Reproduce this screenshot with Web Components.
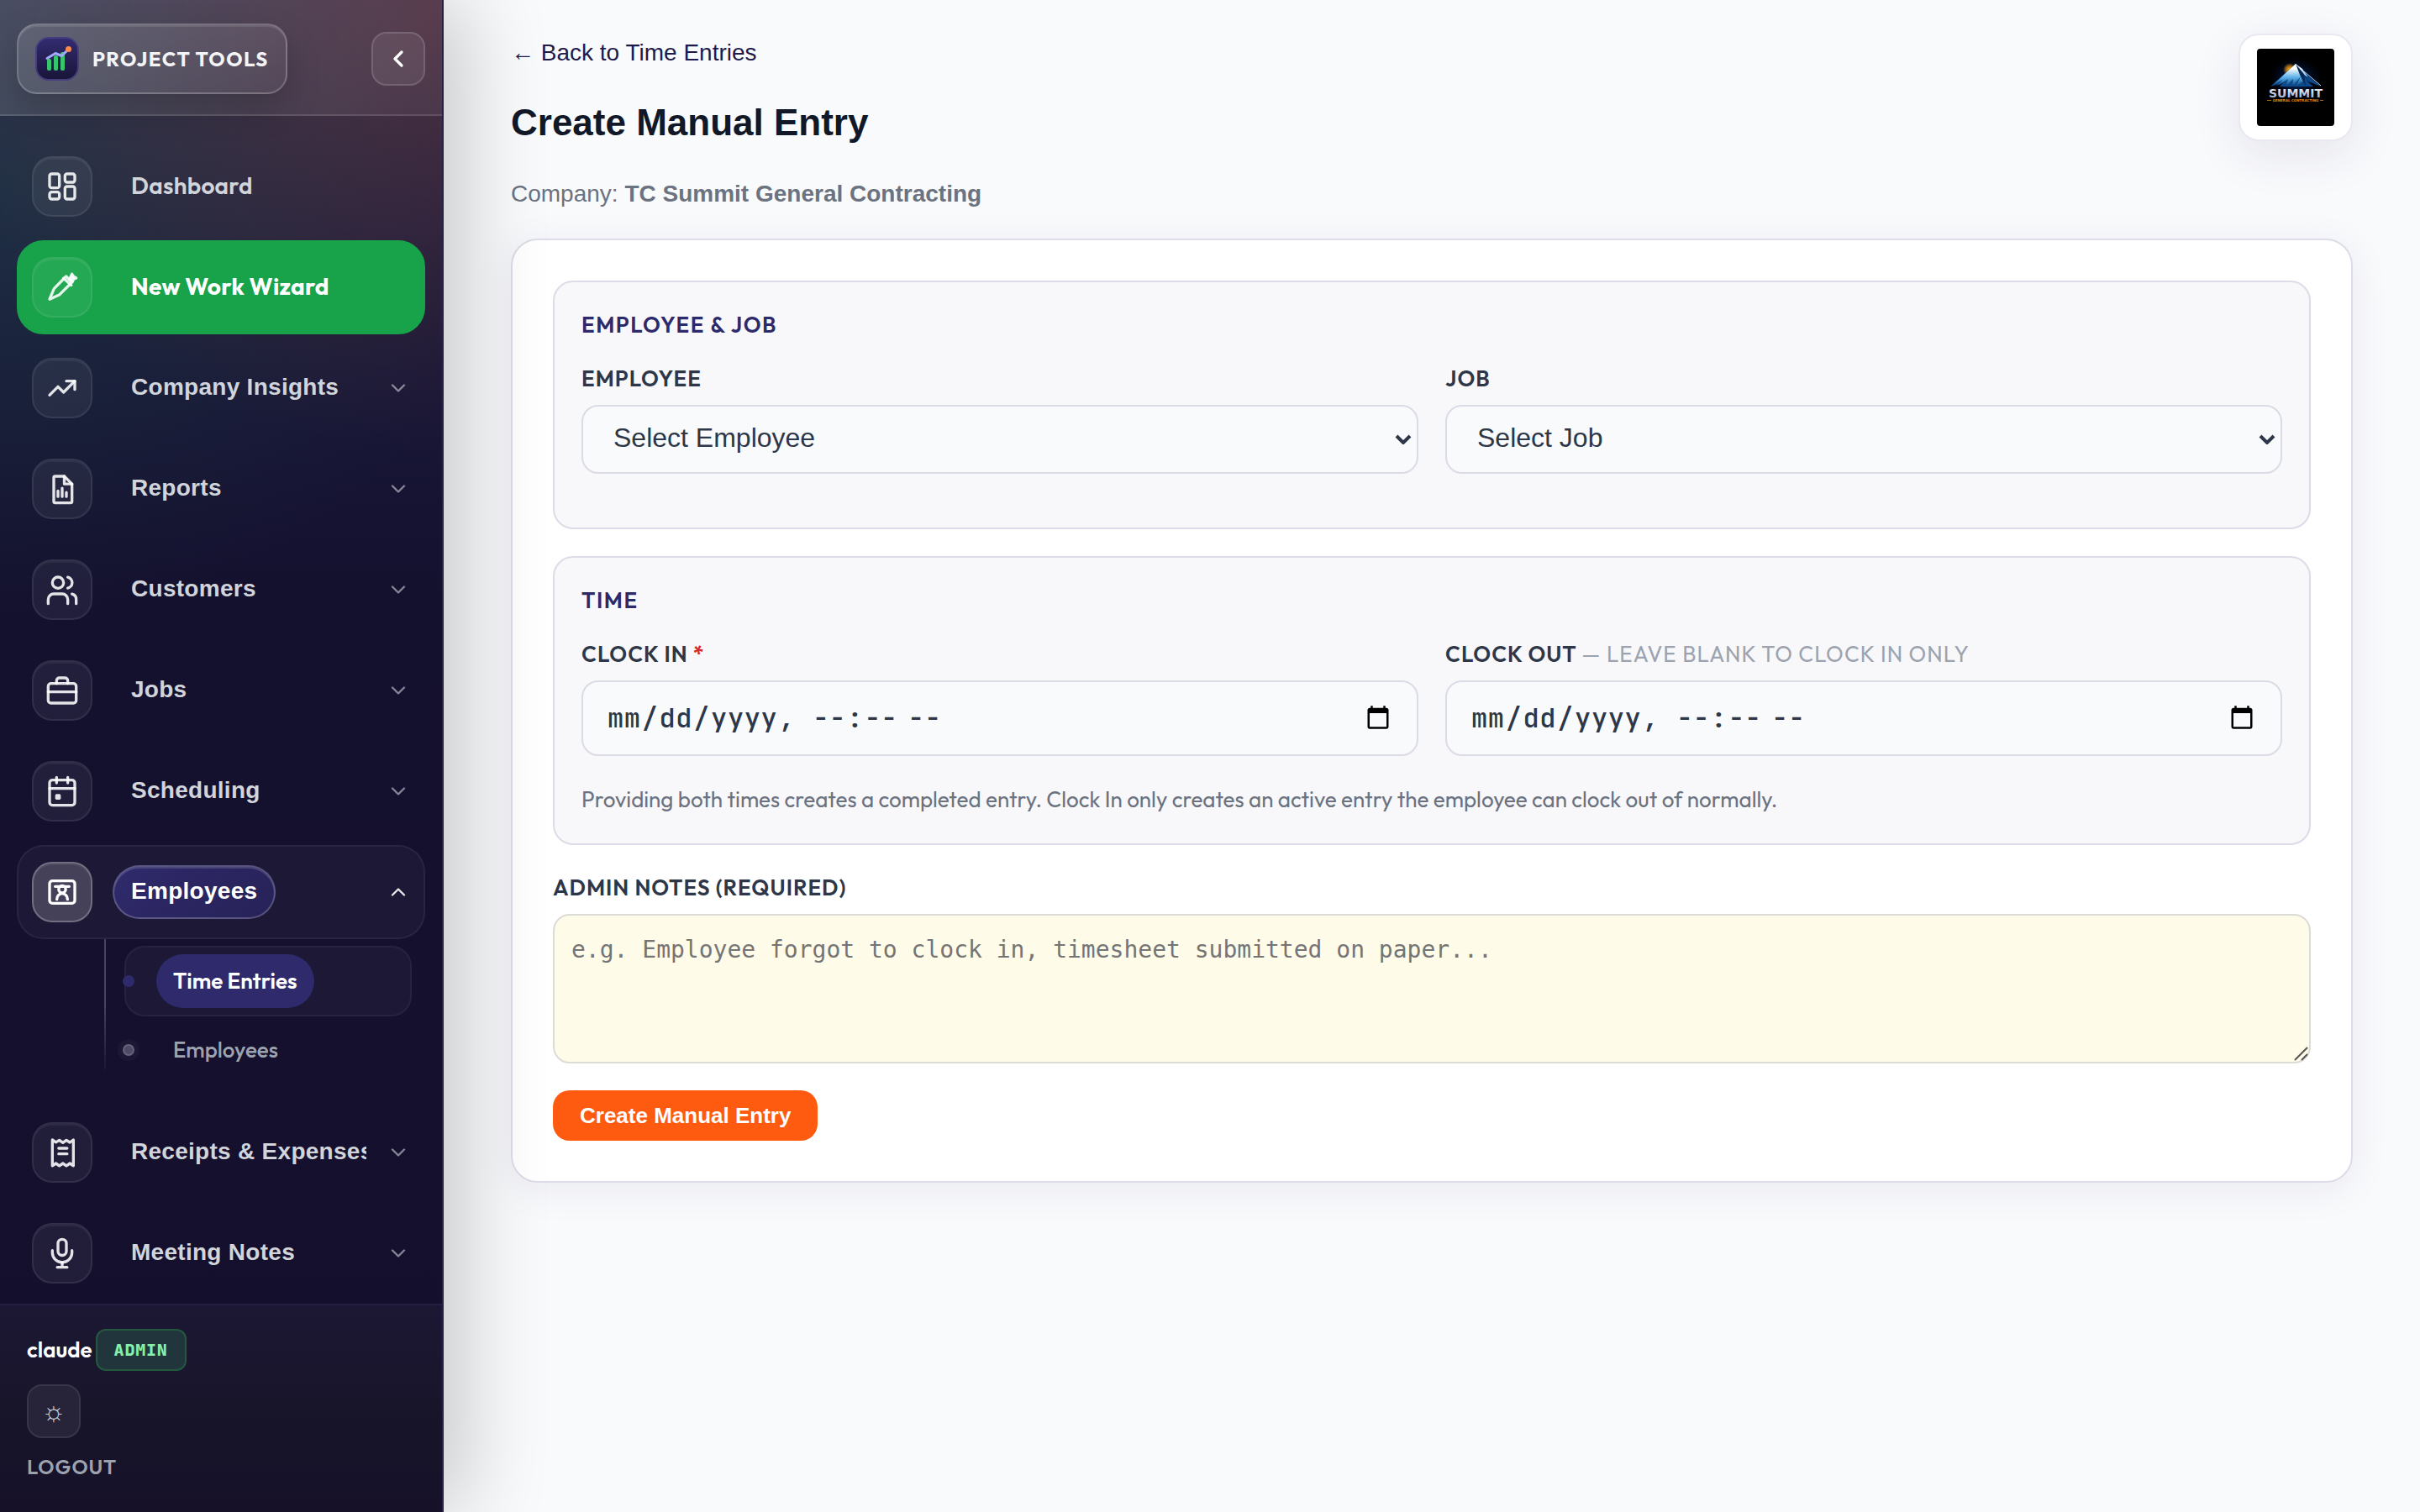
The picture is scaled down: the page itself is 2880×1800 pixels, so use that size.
<!DOCTYPE html>
<html lang="en">
<head>
<meta charset="utf-8">
<title>Create Manual Entry</title>
<style>
    body { margin: 0; }
</style>
</head>
<body>
<time-entry-app></time-entry-app>

<script>
const UI_FONT = `Outfit, Lato, sans-serif`;
const BASE_FONT = `"Liberation Sans", Arial, sans-serif`;
const MONO_FONT = `"JetBrains Mono", "DejaVu Sans Mono", monospace`;

const ICONS = {
    dashboard: `<rect x="3" y="3" width="7" height="10" rx="1.5"/><rect x="14" y="3" width="7" height="6" rx="1.5"/><rect x="14" y="12" width="7" height="9" rx="1.5"/><rect x="3" y="16" width="7" height="5" rx="1.5"/>`,
    wizard: `<path d="M3 20.5 6.2 13 14.8 4.2 19 8.4 10.2 17.2z"/><path d="M13 5.5l5.5 5"/><path d="M19 2.6l1 1.6 2 1.2-1.8.8-.8 1.8-2-2z" fill="currentColor"/>`,
    insights: `<path d="M3 17l6-6 4 4 8-8"/><path d="M15 7h6v6"/>`,
    reports: `<path d="M13.5 3H7a1 1 0 0 0-1 1v17a1 1 0 0 0 1 1h11a1 1 0 0 0 1-1V8.5z"/><path d="M13.5 3v5.5H19"/><path d="M9 13.5v4M12 11.5v6M15 14.5v3"/>`,
    customers: `<path d="M16 22v-3a4 4 0 0 0-4-4H6a4 4 0 0 0-4 4v3"/><circle cx="9" cy="7" r="4"/><path d="M22 22v-3a4 4 0 0 0-3-3.9"/><path d="M16 3.1a4 4 0 0 1 0 7.8"/>`,
    jobs: `<rect x="2" y="7" width="20" height="14" rx="2"/><path d="M8 7V5a2 2 0 0 1 2-2h4a2 2 0 0 1 2 2v2"/><path d="M2 13h20"/>`,
    scheduling: `<rect x="3" y="4" width="18" height="18" rx="2"/><path d="M8 2v4M16 2v4M3 10h18"/><rect x="8" y="15" width="2" height="2"/>`,
    employees: `<rect x="3" y="4" width="18" height="16" rx="2"/><circle cx="12" cy="10" r="2.5"/><path d="M7 8h10"/><path d="M8.2 17.2a3.8 4.2 0 0 1 7.6 0"/>`,
    receipts: `<path d="M5 3l2.5 1.7L10 3.2l2.5 1.8L15 3.2l2.5 1.6L20 3v18.5l-2.5-1.7L15 21.5l-2.5-1.7L10 21.5l-2.5-1.7L5 21.5z"/><path d="M9.5 9h6M9.5 13h6"/>`,
    meetings: `<rect x="9" y="2" width="6" height="11.5" rx="3"/><path d="M5 10v1.5a7 7 0 0 0 14 0V10"/><path d="M12 18.5V22M8.5 22h7"/>`,
    chevron: `<path d="M6 9l6 6 6-6"/>`,
    back: `<path d="M15 6l-6 6 6 6"/>`
};

const icon = (name, size, stroke = 2) =>
    `<svg width="${size}" height="${size}" viewBox="0 0 24 24" fill="none" stroke="currentColor" stroke-width="${stroke}" stroke-linecap="round" stroke-linejoin="round" aria-hidden="true">${ICONS[name]}</svg>`;


class NavItem extends HTMLElement {
    #shadow = this.attachShadow({ mode: 'open' });

    connectedCallback() {
        const group = this.hasAttribute('group');
        const open = this.hasAttribute('open');
        const inner = `
            <span class="icon">${icon(this.getAttribute('icon'), 40)}</span>
            <span class="text"><span class="label"><slot></slot></span></span>
            ${group ? `<span class="chevron">${icon('chevron', 28)}</span>` : ''}`;
        this.#shadow.innerHTML = `
            <style>
                :host { display: block; flex: none; }
                .row {
                    display: flex; align-items: center; gap: 24px; width: 100%; height: 112px; box-sizing: border-box;
                    padding: 0 16px; border: 2px solid transparent; border-radius: 32px; background: none;
                    color: #d1d5db; font: 600 28px/36px ${UI_FONT}; letter-spacing: .01em; text-align: left; text-decoration: none;
                }
                button.row { font-family: ${BASE_FONT}; }
                .icon {
                    display: grid; place-items: center; flex: none; width: 72px; height: 72px; box-sizing: border-box;
                    border: 2px solid rgba(255, 255, 255, .08); border-radius: 24px; color: rgba(255, 255, 255, .88);
                    background: rgba(255, 255, 255, .06); box-shadow: inset 0 2px 0 rgba(255, 255, 255, .05);
                }
                .text { flex: 1; min-width: 0; overflow: hidden; white-space: nowrap; }
                .label { display: block; width: fit-content; padding: 11px 20px 13px; border: 2px solid transparent; border-radius: 32px; }
                .chevron { display: flex; opacity: .6; }
                :host([accent]) .row { background: #18a34a; border-color: #18a34a; color: #fff; font-weight: 700; }
                :host([open]) .row { background: rgba(255, 255, 255, .035); border-color: rgba(255, 255, 255, .06); color: #fff; }
                :host([open]) .icon { background: rgba(255, 255, 255, .18); border-color: rgba(255, 255, 255, .24); color: #fff; }
                :host([open]) .label {
                    background: linear-gradient(135deg, #2f2a6b, #272257); border-color: rgba(255, 255, 255, .22);
                    box-shadow: inset 0 2px 0 rgba(255, 255, 255, .14);
                }
                :host([open]) .chevron { transform: rotate(180deg); opacity: .9; }
            </style>
            ${group ? `<button class="row" type="button" aria-expanded="${open}">${inner}</button>` : `<a class="row" href="#">${inner}</a>`}`;
    }
}

customElements.define('nav-item', NavItem);


class SubItem extends HTMLElement {
    #shadow = this.attachShadow({ mode: 'open' });

    constructor() {
        super();
        this.#shadow.innerHTML = `
            <style>
                :host { display: block; }
                a {
                    display: flex; align-items: center; height: 76px; box-sizing: border-box; padding: 0 36px;
                    position: relative; border: 2px solid transparent; border-radius: 24px;
                    color: #9ca3af; font: 500 26px/36px ${UI_FONT}; text-decoration: none;
                }
                a::before {
                    content: ''; position: absolute; left: -4px; width: 14px; height: 14px; border-radius: 50%; box-sizing: border-box;
                    background: #4f4b67; border: 2px solid #66627c; box-shadow: 0 0 0 6px rgba(255, 255, 255, .03);
                }
                span { padding: 14px 20px; border-radius: 32px; }
                :host([active]) a { height: 84px; background: rgba(255, 255, 255, .035); border-color: rgba(255, 255, 255, .05); color: #fff; font-weight: 600; }
                :host([active]) a::before { background: #2f2a6b; border-color: #2f2a6b; box-shadow: none; }
                :host([active]) span { background: #2f2a6b; }
            </style>
            <a href="#"><span><slot></slot></span></a>`;
    }
}

customElements.define('sub-item', SubItem);


class SideBar extends HTMLElement {
    #shadow = this.attachShadow({ mode: 'open' });

    constructor() {
        super();
        this.#shadow.innerHTML = `
            <style>
                :host {
                    display: flex; flex-direction: column; flex: none; width: 528px; height: 100vh; box-sizing: border-box;
                    position: relative; z-index: 1; border-right: 2px solid #262145; font-family: ${UI_FONT};
                    background:
                        radial-gradient(620px 540px at 100% 0, rgba(255, 96, 40, .18), transparent),
                        radial-gradient(620px 520px at 0 220px, rgba(34, 160, 100, .14), transparent),
                        linear-gradient(180deg, #29274a 0, #1c1a3c 320px, #14112f 700px, #140f2d 100%);
                    box-shadow: 24px 0 96px rgba(0, 0, 0, .2);
                }
                header {
                    display: flex; align-items: center; justify-content: space-between;
                    padding: 28px 20px 24px; border-bottom: 2px solid rgba(255, 255, 255, .12);
                    background: linear-gradient(100deg, rgba(255, 255, 255, .13), rgba(255, 255, 255, .05));
                }
                .brand {
                    display: flex; align-items: center; gap: 16px; padding: 14px 20px; border-radius: 24px;
                    border: 2px solid rgba(255, 255, 255, .2); background: linear-gradient(160deg, rgba(255, 255, 255, .13), rgba(255, 255, 255, .04));
                    box-shadow: 0 16px 40px rgba(0, 0, 0, .2), inset 0 2px 0 rgba(255, 255, 255, .1);
                    color: #f4f4f6; font: 700 24px/32px ${UI_FONT}; letter-spacing: .06em; text-decoration: none; white-space: nowrap;
                }
                .collapse {
                    display: grid; place-items: center; width: 64px; height: 64px; padding: 0; border-radius: 18px; color: #fff;
                    border: 2px solid rgba(255, 255, 255, .14); background: rgba(255, 255, 255, .08);
                }
                nav { display: flex; flex-direction: column; gap: 8px; flex: 1; min-height: 0; overflow: hidden; padding: 28px 20px 0; }
                .sub { margin: -8px 0 0 104px; border-left: 2px solid; border-image: linear-gradient(#49455f 40%, #1c1834 81%, transparent 82%) 1; padding: 8px 16px 20px 22px; }
                sub-item + sub-item { margin-top: 2px; }
                footer {
                    display: flex; flex-direction: column; align-items: flex-start; gap: 16px; padding: 28px 32px 36px;
                    border-top: 2px solid #242040; background: linear-gradient(180deg, #1c1834, #171429 60%, #161129);
                }
                .user { display: flex; align-items: center; gap: 4px; color: #fff; font: 600 26px/34px ${UI_FONT}; }
                .role {
                    padding: 7px 20px; border: 2px solid #24583f; border-radius: 12px; background: #20353c;
                    color: #86efac; font: 800 20px/32px ${MONO_FONT}; letter-spacing: .04em;
                }
                .theme {
                    width: 64px; height: 64px; padding: 0; border: 2px solid #383449; border-radius: 18px;
                    background: #272338; color: #d1d5db; font: 32px/36px ${BASE_FONT};
                }
                .logout { color: #9ca3af; font: 600 24px/36px ${UI_FONT}; letter-spacing: .04em; text-decoration: none; }
            </style>
            <header>
                <a class="brand" href="#">
                    <svg width="52" height="52" viewBox="0 0 52 52" aria-hidden="true">
                        <defs><linearGradient id="tile" x1="0" y1="0" x2="0" y2="1"><stop stop-color="#322c72"/><stop offset="1" stop-color="#191437"/></linearGradient></defs>
                        <rect x="1" y="1" width="50" height="50" rx="15" fill="url(#tile)" stroke="#453f80" stroke-width="2"/>
                        <g fill="#36c76c"><rect x="14" y="26" width="5" height="14" rx="2"/><rect x="22" y="22" width="5" height="18" rx="2"/><rect x="30" y="18" width="5" height="22" rx="2"/></g>
                        <path d="M14 25.5l10-6 7.5 3 8-8" fill="none" stroke="#a5a8ff" stroke-width="3" stroke-linecap="round" stroke-linejoin="round"/>
                        <circle cx="39.5" cy="14.5" r="3.5" fill="#ff8a4c"/>
                    </svg>
                    PROJECT TOOLS
                </a>
                <button class="collapse" type="button" aria-label="Collapse sidebar">${icon('back', 32, 2.5)}</button>
            </header>
            <nav>
                <nav-item icon="dashboard">Dashboard</nav-item>
                <nav-item icon="wizard" accent>New Work Wizard</nav-item>
                <nav-item icon="insights" group>Company Insights</nav-item>
                <nav-item icon="reports" group>Reports</nav-item>
                <nav-item icon="customers" group>Customers</nav-item>
                <nav-item icon="jobs" group>Jobs</nav-item>
                <nav-item icon="scheduling" group>Scheduling</nav-item>
                <nav-item icon="employees" group open>Employees</nav-item>
                <div class="sub">
                    <sub-item active>Time Entries</sub-item>
                    <sub-item>Employees</sub-item>
                </div>
                <nav-item icon="receipts" group>Receipts &amp; Expenses</nav-item>
                <nav-item icon="meetings" group>Meeting Notes</nav-item>
            </nav>
            <footer>
                <div class="user">claude <span class="role">ADMIN</span></div>
                <button class="theme" type="button" aria-label="Toggle theme">☼</button>
                <a class="logout" href="#">LOGOUT</a>
            </footer>`;
    }
}

customElements.define('side-bar', SideBar);


class FormSection extends HTMLElement {
    #shadow = this.attachShadow({ mode: 'open' });

    connectedCallback() {
        this.#shadow.innerHTML = `
            <style>
                :host { display: block; padding: 32px; border: 2px solid #dcdbe7; border-radius: 24px; background: #f8f8fb; }
                h2 { margin: 0 0 26px; color: #2d2a6b; font: 600 26px/38px ${UI_FONT}; letter-spacing: .06em; }
                .grid { display: grid; grid-template-columns: 1fr 1fr; gap: 32px; }
            </style>
            <h2>${this.getAttribute('heading')}</h2>
            <div class="grid"><slot></slot></div>
            <slot name="hint"></slot>`;
    }
}

customElements.define('form-section', FormSection);


// one label and one control; kind is select, datetime or notes
class FormField extends HTMLElement {
    #shadow = this.attachShadow({ mode: 'open' });

    connectedCallback() {
        const hint = this.getAttribute('placeholder');
        const control = {
            select: `<span class="pick"><select id="control"><option>${hint}</option></select>
                <svg width="20" height="12" viewBox="0 0 20 12" aria-hidden="true"><path d="M2 2l8 8 8-8" fill="none" stroke="currentColor" stroke-width="4"/></svg></span>`,
            datetime: `<input id="control" type="datetime-local">`,
            notes: `<span class="pad"><textarea id="control" placeholder="${hint}"></textarea>
                <svg width="20" height="20" viewBox="0 0 20 20" aria-hidden="true"><path d="M3 18L18 3M11 18l7-7" fill="none" stroke="#555" stroke-width="2"/></svg></span>`
        }[this.getAttribute('kind')];
        this.#shadow.innerHTML = `
            <style>
                :host { display: flex; flex-direction: column; gap: 12px; min-width: 0; color: #2d3748; }
                label { font: 600 26px/38px ${UI_FONT}; letter-spacing: .04em; }
                select, input, textarea {
                    display: block; width: 100%; box-sizing: border-box; margin: 0; border: 2px solid #dadbe5; border-radius: 20px;
                    background: #f9fafc; color: #2d3748;
                }
                select { appearance: none; padding: 18px 36px 22px; font: 32px/38px ${BASE_FONT}; }
                input { height: 90px; padding: 0 28px; font: 500 32px/42px ${MONO_FONT}; letter-spacing: .02em; }
                textarea { min-height: 178px; padding: 20px; background: #fefbe8; border-color: #dddbd5; font: 28px/42px "DejaVu Sans Mono", monospace; resize: none; }
                .pick, .pad { display: grid; }
                .pick > *, .pad > * { grid-area: 1 / 1; }
                .pick svg { place-self: center end; margin-right: 8px; pointer-events: none; }
                .pad svg { place-self: end; margin: 2px; pointer-events: none; }
            </style>
            <label for="control"><slot></slot></label>
            ${control}`;
    }
}

customElements.define('form-field', FormField);


class CompanyLogo extends HTMLElement {
    #shadow = this.attachShadow({ mode: 'open' });

    constructor() {
        super();
        this.#shadow.innerHTML = `
            <style>
                :host {
                    display: block; flex: none; padding: 16px 20px; border: 2px solid #e9e8f0; border-radius: 24px;
                    background: #fff; box-shadow: 0 16px 56px rgba(45, 35, 90, .1);
                }
                svg { display: block; border-radius: 4px; background: #000; }
            </style>
            <svg width="92" height="92" viewBox="0 0 92 92" role="img" aria-label="Summit General Contracting">
                <defs>
                    <radialGradient id="glow"><stop stop-color="#0b4fc0" stop-opacity=".8"/><stop offset="1" stop-color="#001" stop-opacity="0"/></radialGradient>
                    <radialGradient id="sun"><stop stop-color="#ffb020"/><stop offset=".5" stop-color="#f59a10" stop-opacity=".7"/><stop offset="1" stop-color="#f59a10" stop-opacity="0"/></radialGradient>
                    <linearGradient id="ice" x1="0" y1="0" x2="0" y2="1"><stop offset=".2" stop-color="#fff"/><stop offset=".6" stop-color="#5ab0e8"/><stop offset="1" stop-color="#07407e"/></linearGradient>
                    <linearGradient id="steel" x1="0" y1="0" x2="0" y2="1"><stop stop-color="#fff"/><stop offset="1" stop-color="#8b9cc4"/></linearGradient>
                </defs>
                <ellipse cx="46" cy="36" rx="34" ry="28" fill="url(#glow)"/>
                <circle cx="39" cy="25" r="8" fill="url(#sun)"/>
                <path d="M46 18L16 45l9-3-3 3 10-6-5 6h40l-8-7 17 7-18-15-2-3-2 2z" fill="#0c4a8c"/>
                <path d="M46 18L33 30l-15 14 12-7-5 7 12-8-3 9 9-9-1 9 10-12-6 12 10-7-4-8 8 3-6-9z" fill="url(#ice)"/>
                <path d="M46 18l5 13 7 14-2-13 9 12-10-15z" fill="#082a58"/>
                <path d="M46 18l14 15M56 27l20 17" stroke="#b8d4f0" fill="none"/>
                <text x="46" y="58" text-anchor="middle" font-family="DejaVu Sans" font-weight="700" font-size="14" fill="url(#steel)">SUMMIT</text>
                <text x="46" y="63" text-anchor="middle" font-family="DejaVu Sans" font-weight="700" font-size="4" fill="#e0920f">GENERAL CONTRACTING</text>
                <path d="M12 61.5h5M75 61.5h4" stroke="#a86c10"/>
            </svg>`;
    }
}

customElements.define('company-logo', CompanyLogo);


class TimeEntryApp extends HTMLElement {
    #shadow = this.attachShadow({ mode: 'open' });

    constructor() {
        super();
        this.#shadow.innerHTML = `
            <style>
                :host { display: flex; min-height: 100vh; background: #f9fafc; font: 28px/46px ${BASE_FONT}; color: #6b7280; }
                main { flex: 1; min-width: 0; padding: 40px 80px; }
                .top { display: flex; justify-content: space-between; align-items: flex-start; }
                .back { display: inline-block; color: #1e1b4b; text-decoration: none; }
                h1 { margin: 32px 0 34px; color: #111827; font-size: 44px; line-height: 56px; }
                p { margin: 0; }
                form {
                    display: flex; flex-direction: column; gap: 32px; margin-top: 30px; padding: 48px;
                    border: 2px solid #dddce8; border-radius: 32px; background: #fff; box-shadow: 0 8px 48px rgba(45, 35, 90, .07);
                }
                .spaced { margin-bottom: 32px; }
                .required { color: #dc2626; }
                .optional { color: #9ca3af; font-weight: 400; }
                .hint { margin-top: 32px; font: 26px/40px ${UI_FONT}; }
                form > button {
                    align-self: flex-start; padding: 16px 32px; border: 0; border-radius: 20px; background: #fe5b11;
                    color: #fff; font: 700 26px/28px ${BASE_FONT};
                }
            </style>
            <side-bar></side-bar>
            <main>
                <div class="top">
                    <div>
                        <a class="back" href="#">← Back to Time Entries</a>
                        <h1>Create Manual Entry</h1>
                        <p>Company: <strong>TC Summit General Contracting</strong></p>
                    </div>
                    <company-logo></company-logo>
                </div>
                <form>
                    <form-section heading="EMPLOYEE &amp; JOB">
                        <form-field class="spaced" kind="select" placeholder="Select Employee">EMPLOYEE</form-field>
                        <form-field class="spaced" kind="select" placeholder="Select Job">JOB</form-field>
                    </form-section>
                    <form-section heading="TIME">
                        <form-field kind="datetime">CLOCK IN <span class="required">*</span></form-field>
                        <form-field kind="datetime">CLOCK OUT <span class="optional">— LEAVE BLANK TO CLOCK IN ONLY</span></form-field>
                        <p class="hint" slot="hint">Providing both times creates a completed entry. Clock In only creates an active entry the employee can clock out of normally.</p>
                    </form-section>
                    <form-field kind="notes" placeholder="e.g. Employee forgot to clock in, timesheet submitted on paper...">ADMIN NOTES (REQUIRED)</form-field>
                    <button type="button">Create Manual Entry</button>
                </form>
            </main>`;
    }
}

customElements.define('time-entry-app', TimeEntryApp);
</script>
</body>
</html>
